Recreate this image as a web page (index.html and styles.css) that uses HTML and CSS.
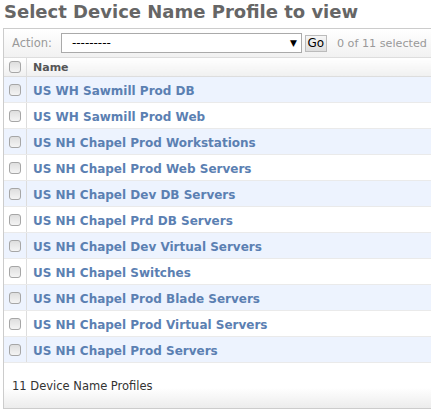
FILE: index.html
```html
<!DOCTYPE html>
<html lang="en">
<head>
<meta charset="utf-8">
<title>Select Device Name Profile to view</title>
<link rel="stylesheet" href="styles.css">
</head>
<body>
<h1 class="title">Select Device Name Profile to view</h1>
<div class="module">
  <div class="actions">
    <span class="action-label">Action:</span>
    <div class="select"><span class="select-value">---------</span><span class="select-arrow">▼</span></div>
    <button class="go" type="button">Go</button>
    <span class="counter">0 of 11 selected</span>
  </div>
  <table class="results">
    <thead>
      <tr><th class="check-col"><input type="checkbox" class="cb"></th><th class="name-col">Name</th></tr>
    </thead>
    <tbody>
      <tr class="row1"><td class="check-col"><input type="checkbox" class="cb"></td><td class="name-col"><a href="#">US WH Sawmill Prod DB</a></td></tr>
      <tr class="row2"><td class="check-col"><input type="checkbox" class="cb"></td><td class="name-col"><a href="#">US WH Sawmill Prod Web</a></td></tr>
      <tr class="row1"><td class="check-col"><input type="checkbox" class="cb"></td><td class="name-col"><a href="#">US NH Chapel Prod Workstations</a></td></tr>
      <tr class="row2"><td class="check-col"><input type="checkbox" class="cb"></td><td class="name-col"><a href="#">US NH Chapel Prod Web Servers</a></td></tr>
      <tr class="row1"><td class="check-col"><input type="checkbox" class="cb"></td><td class="name-col"><a href="#">US NH Chapel Dev DB Servers</a></td></tr>
      <tr class="row2"><td class="check-col"><input type="checkbox" class="cb"></td><td class="name-col"><a href="#">US NH Chapel Prd DB Servers</a></td></tr>
      <tr class="row1"><td class="check-col"><input type="checkbox" class="cb"></td><td class="name-col"><a href="#">US NH Chapel Dev Virtual Servers</a></td></tr>
      <tr class="row2"><td class="check-col"><input type="checkbox" class="cb"></td><td class="name-col"><a href="#">US NH Chapel Switches</a></td></tr>
      <tr class="row1"><td class="check-col"><input type="checkbox" class="cb"></td><td class="name-col"><a href="#">US NH Chapel Prod Blade Servers</a></td></tr>
      <tr class="row2"><td class="check-col"><input type="checkbox" class="cb"></td><td class="name-col"><a href="#">US NH Chapel Prod Virtual Servers</a></td></tr>
      <tr class="row1"><td class="check-col"><input type="checkbox" class="cb"></td><td class="name-col"><a href="#">US NH Chapel Prod Servers</a></td></tr>
    </tbody>
  </table>
  <p class="paginator">11 Device Name Profiles</p>
</div>
</body>
</html>
```

FILE: styles.css
```css
html, body {
  margin: 0;
  background: #fff;
}

body {
  font-family: Verdana, "DejaVu Sans", sans-serif;
  padding: 1px 0 0 3px;
}

.title {
  margin: 0 0 5px 1px;
  font-size: 18px;
  line-height: 22px;
  font-weight: bold;
  color: #666;
  white-space: nowrap;
}

.module {
  border: 1px solid #ccc;
  border-right: none;
}

.actions {
  height: 28px;
  display: flex;
  align-items: center;
  padding-left: 8px;
  background: linear-gradient(#fff, #f1f1f1);
  border-bottom: 1px solid #ddd;
  font-size: 11.5px;
  color: #999;
  white-space: nowrap;
}

.action-label {
  margin-right: 9px;
}

.select {
  width: 241px;
  height: 20px;
  flex-shrink: 0;
  box-sizing: border-box;
  border: 1px solid #aaa;
  background: #fff;
  display: flex;
  align-items: center;
  justify-content: space-between;
  padding: 0 4px 0 10px;
  color: #000;
  font-size: 12px;
}

.select-arrow {
  font-size: 9px;
}

.go {
  margin: 0 0 0 3px;
  width: 22px;
  height: 17px;
  flex-shrink: 0;
  padding: 0;
  border: 1px solid #bbb;
  background: linear-gradient(#f6f6f6, #dedede);
  font-family: Verdana, "DejaVu Sans", sans-serif;
  font-size: 12px;
  color: #000;
}

.counter {
  margin-left: 10px;
  font-size: 11.2px;
}

.results {
  width: 100%;
  border-collapse: collapse;
}

.results th,
.results td {
  padding: 0;
  text-align: left;
}

.results thead th {
  height: 18px;
  border-bottom: 1px solid #ddd;
  background: linear-gradient(#fff, #f0f0f0);
  font-size: 11px;
  font-weight: bold;
  color: #555;
}

.results tbody td {
  height: 25px;
  border-bottom: 1px solid #eaeaea;
}

.results .check-col {
  width: 17px;
  padding-left: 5px;
  border-right: 1px solid #ddd;
  line-height: 0;
}

.results .name-col {
  padding-left: 6px;
}

.row1 {
  background: #edf3fe;
}

.row2 {
  background: #fff;
}

.cb {
  appearance: none;
  -webkit-appearance: none;
  display: inline-block;
  width: 12px;
  height: 12px;
  margin: 0;
  box-sizing: border-box;
  border: 1px solid #a6a6a6;
  border-radius: 3px;
  background: linear-gradient(#dedede, #f4f4f4);
  vertical-align: middle;
}

.name-col a {
  color: #5b80b2;
  font-weight: bold;
  font-size: 12px;
  text-decoration: none;
}

.paginator {
  margin: 0;
  height: 45px;
  line-height: 47px;
  padding-left: 8px;
  font-size: 11.5px;
  color: #333;
  background: linear-gradient(#fff 55%, #ececec);
}
```
